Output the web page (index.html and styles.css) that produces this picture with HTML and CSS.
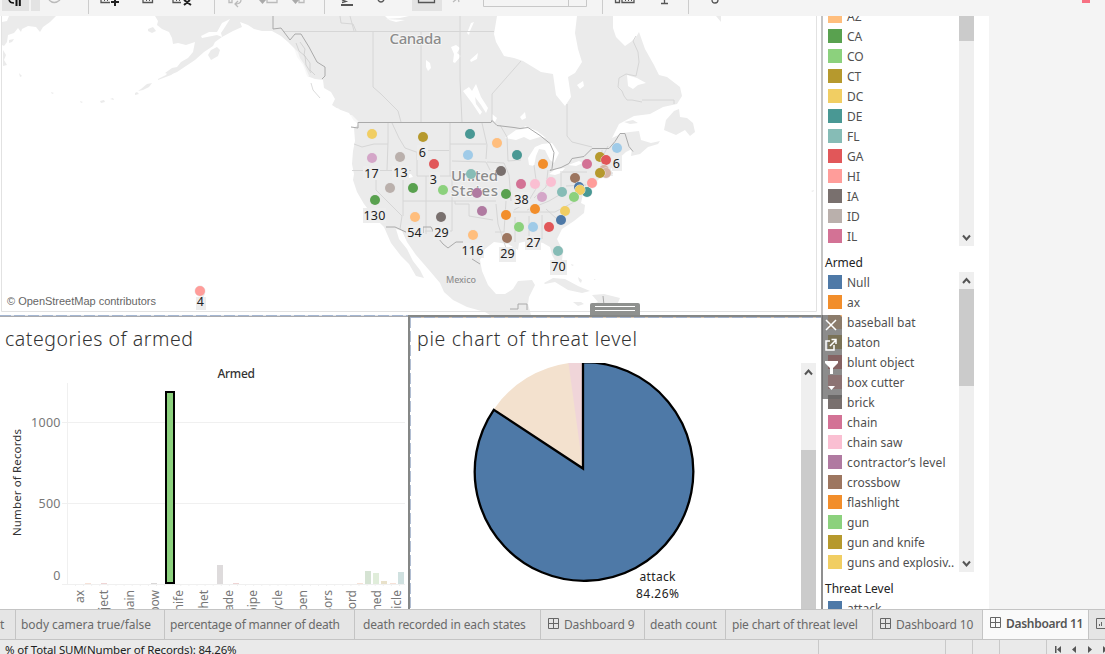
FILE: index.html
```html
<!DOCTYPE html>
<html lang="en">
<head>
<meta charset="utf-8">
<title>Dashboard 11</title>
<link rel="stylesheet" href="styles.css">
</head>
<body>
<div class="app">
<header class="toolbar">
<svg width="1105" height="16" viewBox="0 0 1105 16">
<path fill="#e3e3e3" d="M2 0h27v11H2zM31 0h9v11h-9zM412 0h30v11h-30z"/>
<path fill="#111" d="M15.500 0h2v6h-2zM18.800 0h2v6h-2z"/><path fill="none" stroke="#111" stroke-width="1.500" d="M9 0q1 3 5 3"/>
<path fill="none" stroke="#bbb" stroke-width="1.300" d="M49 0q5 5 11 0M229 0v2.500h3V0M241 0q0 4-6 4m3-3l-3 3 3 3M267 0v2.500h10V0M299 0v2.500h5V0M453 2l5-4 1 4"/>
<path fill="#aaa" d="M259 0h7l-3.500 4zM292 0h7l-3.500 4z"/>
<path fill="none" stroke="#555" stroke-width="1.300" d="M101 0v2.500h9M143 0v2.500h9.500V0M173 0v2.500h8M342 0l4 1.500-4 1M378 0q3 4 6 0M418.500 0v2.500h16V0M615.500 0v2.500h4V0M622 0v2.500h12V0M661 3.500h7M664.500 0v3M712 0q0 3 3 3t3-3"/>
<path fill="#555" d="M104 0h1v1h-1zM107 0h1v1h-1zM146 0h1v1h-1zM149 0h1v1h-1zM176 0h1v1h-1zM179 0h1v1h-1zM341 4h12v2h-12zM625 0h1v1h-1zM628 0h1v1h-1zM631 0h1v1h-1z"/>
<path fill="none" stroke="#222" stroke-width="2" d="M111 2h8M115 0v6M184 5l6-5M184 0l7 5"/>
<path fill="#ccc" d="M88 0h1v14h-1zM214 0h1v14h-1zM324 0h1v14h-1zM602 0h1v14h-1zM688 0h1v14h-1z"/>
<path fill="none" stroke="#c8c8c8" d="M483.500 0v6.500h103V0M568.500 0v6"/>
<path fill="#f77183" d="M1082 0h8v3h-8z"/>
</svg>
</header>
<main class="workspace">
<section class="sheets">
<div class="map">
<svg width="821" height="299" viewBox="0 16 821 299">
<g fill="#ebebeb">
<path d="M9 16H56L50 22 43 27 40 32 36 27 28 26 22 29 21 32 18 28 14 33 8 35 7 42 4 46 2 45V22L7 21ZM3 50L6 55 4 60 7 65 3 66ZM9 40l5-1-2 3-3 1ZM148 29l5-2 3 4-4 2-4-2ZM19 73l3 3-2 1ZM51 92l3 1-2 1ZM80 101l3 1-2 1ZM100 101l4-1 1 2-4 1ZM110 99l3-1 1 2ZM121 97l3 0ZM135 93l2-1 2 2-4 1ZM141 89l6-5 5-1-3 4-6 3-5 1ZM158 79l8-4 3-4 6-3 4 0-8 7-13 5ZM208 55l3-5 6-3 3 3-2 6-7 4Z"/>
<path d="M155 16L158 21 157 25 162 29 169 32 172 38 173 44 178 43 186 45 195 42 193 52 188 58 181 62 177 67 172 68 165 73 170 75 177 72 186 66 195 60 204 52 213 46 215 42 222 37 217 35 202 38 201 36 209 32 217 32 222 23 230 19 225 27 221 33 222 37 233 31 242 27 240 22 248 25 254 29 262 31 272 31 281 36 288 42 294 48 297 57 303 65 307 76 315 79 323 80 324 88 331 92 335 99 332 105 338 109 349 113 354 121 359 124 354 128 355 141 353 151 352 164 354 174 353 180 357 192 364 204 374 217 384 227 391 243 401 256 409 264 416 276 424 278 420 270 413 261 407 249 399 239 396 229 402 231 407 242 416 255 429 270 440 283 444 292 453 300 467 307 485 312 490 315H531L528 304 529 297 535 285 532 280 518 281 513 289 505 294 496 294 488 285 482 271 480 260 485 249 494 242 508 244 518 250 519 243 531 240 543 243 550 247 552 255 556 262 562 261 563 251 557 239 562 229 574 221 584 213 585 205 581 203 583 194 590 190 597 181 602 176 613 176 611 169 617 160 626 152 632 149 631 156 640 154 648 147 658 144 660 141 651 143 641 140 639 131 630 132 623 133 612 138 619 124 634 116 650 114 663 107 677 104 682 96 680 87 667 77 659 75 654 65 645 49 639 32 635 39 625 46 616 37 613 28 613 16H577L575 33 578 49 582 62 575 73 568 77 571 97 565 106 556 95 553 74 541 72 523 61 514 58 504 56 496 42 494 34 497 16Z"/>
<path d="M664 130l2-10 8-9 5-2 1 8 7 1 6 5 2 9-5 4-5-6-9 5ZM624 122l9-2 5 3-8 1ZM544 283l9-5 12 1 13 7 12 5-8 2-14-3-13-8-10 2ZM592 295l12-1 16 4-3 7-14 1-9 3-4-4 8-3ZM573 302l8 0 3 2-6 2ZM571 264l3 1-2 1ZM578 277l4 3-1 3-2-2ZM586 284l3 1ZM594 279l2 0-2 1ZM182 283l2 0ZM185 283l1 1ZM191 287h1ZM195 288l10 6-2 4-3-3ZM811 191l3-1-1 2ZM716 16h5v6Z"/>
</g>
<g fill="#fff">
<path d="M385 19l15-1 9-2h-24l4 4 7 2 9-2ZM471 23l3-1-4 9-1 4-2-2ZM451 47l5-2 4 3-3 5 4 3-6 7-2-1 1-8ZM426 60l4 3 1 5-3 3-2-4ZM470 60l8-7-1 6-6 3ZM463 91l6-4 3 4 4-7 5 13 7 11-2 5-5-8-6-8 1 7 6 8-2 3-8-12ZM492 114l5 4-2 4-3-3ZM520 117l5-5 1 6-4 2ZM577 85l6-4 1 5-4 3ZM627 75l10 3 9 5-8 2-5 4-5-3Z"/>
<path d="M505 138l11-8 7-1 2-3 12 5 9 7-6-1-10 3-6-3-8 3ZM528 158l7-11 7-3 10-1 3 4 4 6-5 10-4-3-5-10-6-1-3 7-2 10-5-1ZM549 174l7-5 9-1-4 5-6 2ZM568 165l11-4 4 2-7 3ZM405 175l6-1 2 3-4 1Z"/>
<path d="M294 48l4 4 2 6 4 6 5 12-3 1-6-14-6-7ZM317 98l5 1 8 10 5 0-9-4-9-5ZM334 108l4 0 7 6 7 1 7 7-5 1-9-6Z" opacity=".65"/>
</g>
<g fill="none" stroke="#c3c3c3" stroke-width=".6"><path d="M300 42l5 7-1 6 6 8 0 7 5 5M296 43l3 8 6 5 1 9 5 8M311 83l2 7 7 8"/></g>
<g fill="none" stroke="#d6d6d6">
<path d="M283 31.500H494M373 31v56l8 7 17 17 3 11M421 31v91M460 16v64l2 42M492 122V94l29-33M567 104v32l5 6 20 5M340 16l1 7 12 1 3 7M350 16l4 15M642 100h32v4M642 102l-10-2-5 0-3-4-2-5-4-4 1-9 7-4 10 2 3-14-1-10-5-11 3-5"/>
<path d="M388 122v20l-1 28M392 123l7 15 6 10 14 5M354 144l8 3 12-3 14 0M417 153v17M417 150.500h32M450 122v54M450 144h36M482 123l5 22-1 14M452 161l34 1 4 8M352 170.500H411M376 170v20l26 26-2 13M403 170v46M403 201H496M426 176v58M417 170v6h35v55h-27M455 201v3h14v12l24 4M487 162l17 1 5 12 2 26M500 125l7 12 1 24 13-1M506 201l-2 31h-9M496 204l2 20 8 24M513 212h42l21-11M515 217v25M529 216v26M542 215v24M534 165l3 22-9 15-14 8M548 170l-2 17-12 11M561 171v23l-12 7-22 9M562 172h25M566 186l20-1M546 209l11 10M602 150v20M596 174l17-1M604 154l4-8"/>
</g>
<g fill="none" stroke="#aaa">
<path d="M273 16V29l8-1 9 12 5-6 6 0 8 13 8 15 8 5 0 9-3 3M351 127l7 1v-5.500H491l1-2 5 5 17 2 6 1 8-1 12 8 10 8 4 9-2 16-2 2 11-3 8-4 3-5 12-2 8-8 17 0 6-7 5-8h5l4 13 4 5M386 227l9 0 13 6h15v-6h8l3 6 9 11 5 4 8-6 7 0M472 259l8 5M510 309h8v-5h9l0 6M603 296l1 9"/>
</g>
<g class="country"><text x="389.500" y="44" textLength="52">Canada</text><text x="451" y="181" textLength="47">United</text><text x="451" y="195.500" textLength="47">States</text></g>
<text class="region" x="446" y="283" textLength="30">Mexico</text>
<g fill="#ededed"><path d="M363 166h17v14h-17zM392 166h17v14h-17zM417 145h11v15h-11zM429 172h11v15h-11zM363 208h23v15h-23zM406 225h17v15h-17zM433 225h17v15h-17zM461 243h23v15h-23zM499 247h17v15h-17zM525 236h16v14h-16zM513 192h17v15h-17zM550 260h17v15h-17zM612 156h10v15h-10zM196 297h10v13h-10z"/></g>
<g class="marks">
<circle cx="372" cy="134" r="5" fill="#f1ce63"/><circle cx="423" cy="137" r="5" fill="#b6992d"/><circle cx="470" cy="134" r="5" fill="#499894"/><circle cx="497" cy="143" r="5" fill="#ffbe7d"/><circle cx="468" cy="155" r="5" fill="#a0cbe8"/><circle cx="517" cy="155" r="5" fill="#499894"/><circle cx="372" cy="158" r="5" fill="#d4a6c8"/><circle cx="400" cy="157" r="5" fill="#bab0ac"/><circle cx="434" cy="164" r="5" fill="#e15759"/><circle cx="543" cy="164" r="5" fill="#f28e2b"/><circle cx="587" cy="164" r="5" fill="#d37295"/><circle cx="600" cy="157" r="5" fill="#b6992d"/><circle cx="606" cy="160" r="5" fill="#e15759"/><circle cx="617" cy="148" r="5" fill="#a0cbe8"/><circle cx="604" cy="170" r="5" fill="#d7b5a6"/><circle cx="606" cy="173" r="5" fill="#d7b5a6"/><circle cx="600" cy="173" r="5" fill="#b6992d"/><circle cx="471" cy="174" r="5" fill="#86bcb6"/><circle cx="501" cy="171" r="5" fill="#79706e"/><circle cx="521" cy="184" r="5" fill="#d37295"/><circle cx="535" cy="184" r="5" fill="#fabfd2"/><circle cx="551" cy="182" r="5" fill="#fabfd2"/><circle cx="575" cy="178" r="5" fill="#9d7660"/><circle cx="579" cy="187" r="5" fill="#4e79a7"/><circle cx="587" cy="192" r="5" fill="#499894"/><circle cx="580" cy="190" r="5" fill="#f1ce63"/><circle cx="592" cy="183" r="5" fill="#ff9d9a"/><circle cx="574" cy="197" r="5" fill="#8cd17d"/><circle cx="562" cy="192" r="5" fill="#86bcb6"/><circle cx="542" cy="197" r="5" fill="#d4a6c8"/><circle cx="535" cy="209" r="5" fill="#f28e2b"/><circle cx="565" cy="211" r="5" fill="#f1ce63"/><circle cx="561" cy="220" r="5" fill="#4e79a7"/><circle cx="549" cy="227" r="5" fill="#e15759"/><circle cx="533" cy="227" r="5" fill="#a0cbe8"/><circle cx="519" cy="227" r="5" fill="#8cd17d"/><circle cx="506" cy="215" r="5" fill="#f28e2b"/><circle cx="506" cy="194" r="5" fill="#59a14f"/><circle cx="507" cy="238" r="5" fill="#9d7660"/><circle cx="558" cy="251" r="5" fill="#86bcb6"/><circle cx="477" cy="193" r="5" fill="#b07aa1"/><circle cx="482" cy="211" r="5" fill="#b07aa1"/><circle cx="473" cy="235" r="5" fill="#ffbe7d"/><circle cx="441" cy="217" r="5" fill="#79706e"/><circle cx="415" cy="217" r="5" fill="#ffbe7d"/><circle cx="413" cy="188" r="5" fill="#59a14f"/><circle cx="390" cy="188" r="5" fill="#bab0ac"/><circle cx="443" cy="190" r="5" fill="#8cd17d"/><circle cx="375" cy="200" r="5" fill="#59a14f"/><circle cx="200" cy="291" r="5" fill="#ff9d9a"/>
</g>
<g class="counts"><text x="422.500" y="157">6</text><text x="371.500" y="178">17</text><text x="400.500" y="177">13</text><text x="433.500" y="184">3</text><text x="374.500" y="220">130</text><text x="414.500" y="237">54</text><text x="441.500" y="237">29</text><text x="472.500" y="255">116</text><text x="507.500" y="258">29</text><text x="533.500" y="247">27</text><text x="521.500" y="204">38</text><text x="558.500" y="271">70</text><text x="616.500" y="168">6</text><text x="200.500" y="306">4</text></g>
<text class="credit" x="7" y="305" textLength="149">© OpenStreetMap contributors</text>
<path fill="none" stroke="#e2e2e2" d="M1.500 16V311.500H816.500V16"/>
<path fill="#8f918f" d="M590 315v-10q0-2 2-2h46q2 0 2 2v10z"/><path stroke="#fff" d="M595 306.500h40M595 310.500h40"/>
</svg>
</div>
<div class="lower">
<article class="panel bars">
<h2>categories of armed</h2>
<svg width="408" height="246" viewBox="0 363 408 246">
<g fill="none" stroke="#f0f0f0"><path d="M67.500 383V585M62 422.500H405M62 503.500H405M62 584.500H405"/><path stroke-dasharray="1 7.100" d="M75 585.500H405"/></g>
<text class="head" x="217.500" y="378" textLength="37.500">Armed</text>
<g class="ticks"><text x="60.500" y="427" textLength="29.500">1000</text><text x="60.500" y="508" textLength="22">500</text><text x="60.500" y="580">0</text></g>
<text class="axis" transform="translate(21 536) rotate(-90)" textLength="107">Number of Records</text>
<path fill="#f6e2d8" d="M85 583h6v1h-6zM357 583h6v1h-6zM390 583h6v1h-6z"/><path fill="#efd5d5" d="M101 583h6v1h-6zM233 583h6v1h-6z"/><path fill="#dad8d8" d="M151 583h6v1h-6z"/>
<path fill="#dedbdc" d="M217 565h6v19h-6z"/><path fill="#d5e3d3" d="M365 571h6v13h-6z"/><path fill="#e0edda" d="M373 573h6v11h-6z"/><path fill="#e8e1ca" d="M381 581h6v3h-6z"/><path fill="#d0e1e0" d="M398 572h6v12h-6z"/>
<path fill="#8cd17d" stroke="#000" stroke-width="2" d="M166 392h8v191h-8z"/>
<g class="members"><text transform="translate(84 590) rotate(-90)">ax</text><text transform="translate(108 590) rotate(-90)">object</text><text transform="translate(133.500 590) rotate(-90)">chain</text><text transform="translate(158.500 590) rotate(-90)">crossbow</text><text transform="translate(183 590) rotate(-90)">knife</text><text transform="translate(207.500 590) rotate(-90)">hatchet</text><text transform="translate(232.500 590) rotate(-90)">grenade</text><text transform="translate(257 590) rotate(-90)">pipe</text><text transform="translate(282 590) rotate(-90)">motorcycle</text><text transform="translate(307 590) rotate(-90)">pen</text><text transform="translate(331.500 590) rotate(-90)">scissors</text><text transform="translate(356 590) rotate(-90)">sword</text><text transform="translate(381 590) rotate(-90)">unarmed</text><text transform="translate(401 590) rotate(-90)">vehicle</text></g>
</svg>
</article>
<article class="panel pie">
<h2>pie chart of threat level</h2>
<div class="pie-body">
<svg width="391" height="246" viewBox="410 363 391 246">
<path fill="#f3e1ce" d="M583 469L494 409A109 109 0 0 1 569 363L583 363Z"/><path fill="#f0d5d9" d="M583 469L568.500 363H583Z"/>
<path fill="#4e79a7" stroke="#000" stroke-width="2.300" d="M583 468.500V362.200A109.300 109.300 0 1 1 493.800 409.800Z"/>
<g class="slice-label"><text x="657.500" y="581" textLength="36">attack</text><text x="657.500" y="598" textLength="43">84.26%</text></g>
</svg>
<div class="scroll pie-scroll"><svg width="15" height="18" viewBox="0 0 15 18"><path d="M4 11.500l3.500-4 3.500 4"/></svg><div class="thumb"></div></div>
</div>
</article>
</div>
</section>
<aside class="legends">
<div class="legend states"><ul>
<li><i style="background:#ffbe7d"></i>AZ</li><li><i style="background:#59a14f"></i>CA</li><li><i style="background:#8cd17d"></i>CO</li><li><i style="background:#b6992d"></i>CT</li><li><i style="background:#f1ce63"></i>DC</li><li><i style="background:#499894"></i>DE</li><li><i style="background:#86bcb6"></i>FL</li><li><i style="background:#e15759"></i>GA</li><li><i style="background:#ff9d9a"></i>HI</li><li><i style="background:#79706e"></i>IA</li><li><i style="background:#bab0ac"></i>ID</li><li><i style="background:#d37295"></i>IL</li></ul>
<div class="scroll"><div class="thumb"></div><svg width="15" height="18" viewBox="0 0 15 18"><path d="M4 7.500l3.500 4 3.500-4"/></svg></div></div>
<h3>Armed</h3>
<div class="legend weapons"><ul>
<li><i style="background:#4e79a7"></i>Null</li><li><i style="background:#f28e2b"></i>ax</li><li><i style="background:#ffbe7d"></i>baseball bat</li><li><i style="background:#b6992d"></i>baton</li><li><i style="background:#e15759"></i>blunt object</li><li><i style="background:#ff9d9a"></i>box cutter</li><li><i style="background:#79706e"></i>brick</li><li><i style="background:#d37295"></i>chain</li><li><i style="background:#fabfd2"></i>chain saw</li><li><i style="background:#b07aa1"></i><span class="level">contractor’s level</span></li><li><i style="background:#9d7660"></i>crossbow</li><li><i style="background:#f28e2b"></i>flashlight</li><li><i style="background:#8cd17d"></i>gun</li><li><i style="background:#b6992d"></i>gun and knife</li><li><i style="background:#f1ce63"></i>guns and explosiv..</li></ul>
<div class="scroll"><svg width="15" height="17" viewBox="0 0 15 17"><path d="M4 11l3.500-4 3.500 4"/></svg><div class="thumb"></div><svg width="15" height="17" viewBox="0 0 15 17"><path d="M4 6.500l3.500 4 3.500-4"/></svg></div></div>
<h3>Threat Level</h3>
<div class="legend threat"><ul><li><i style="background:#4e79a7"></i>attack</li></ul></div>
<svg class="sheet-tools" width="20" height="84" viewBox="0 0 20 84"><path fill="#666" fill-opacity=".75" d="M0 0h18l2 2v80l-2 2H0z"/><g fill="none" stroke="#fff" stroke-width="1.500"><path d="M4 5l10 10M14 5L4 15M8 26H4v9h8v-5M8 31l6-6M9.500 24.500H14V29"/></g><path fill="#fff" d="M3 46h13v2l-5 5v6H8v-6L3 48zM6 71h7l-3.500 4z"/></svg>
</aside>
</main>
<nav class="tabs">
<a class="t0">t</a><a class="t1">body camera true/false</a><a class="t2">percentage of manner of death</a><a class="t3">death recorded in each states</a>
<a class="t4"><svg width="11" height="11" viewBox="0 0 11 11"><path d="M.5.500h10v10H.500zM5.500.500v10M.5 5.500h10"/></svg>Dashboard 9</a><a class="t5">death count</a><a class="t6">pie chart of threat level</a>
<a class="t7"><svg width="11" height="11" viewBox="0 0 11 11"><path d="M.5.500h10v10H.500zM5.500.500v10M.5 5.500h10"/></svg>Dashboard 10</a>
<a class="t8"><svg width="11" height="11" viewBox="0 0 11 11"><path d="M.5.500h10v10H.500zM5.500.500v10M.5 5.500h10"/></svg>Dashboard 11</a>
<a class="t9"><svg width="11" height="11" viewBox="0 0 11 11"><path d="M10.500.500H.500v10h10M3.500 8V6M5.500 8V4"/></svg></a>
</nav>
<footer class="status"><span>% of Total SUM(Number of Records): 84.26%</span>
<svg width="287" height="14" viewBox="818 640 287 14"><path fill="none" stroke="#c9c9c9" d="M818.500 640v14M945.500 640v14M972.500 640v14M999.500 640v14M1046.500 640v14"/><path fill="#555" d="M1055 646h1.500v7H1055zM1061 646v7l-4-3.500zM1076 646v7l-4-3.500zM1088 646v7l4-3.500zM1103 646v7l4-3.500z"/></svg></footer>
</div>
</body>
</html>
```
FILE: styles.css
```css
* { box-sizing: border-box; }
body { margin: 0; background: #f4f4f4; font-family: "Noto Sans", "Open Sans", sans-serif; color: #333; }
svg { display: block; flex: none; }
.app { width: 1105px; height: 654px; display: flex; flex-direction: column; overflow: hidden; }
.toolbar { height: 16px; background: #f4f4f4; }
.workspace { height: 593px; display: flex; overflow: hidden; }
.sheets { width: 821px; background: #fff; }
.map { height: 299px; }
.country { font-size: 15px; font-weight: 500; fill: #8c8c8c; stroke: #f5f5f5; stroke-width: 2px; paint-order: stroke; }
.region { font-size: 9px; font-weight: 500; fill: #909090; }
.marks { stroke: #e9e9e9; stroke-width: 1px; paint-order: stroke; }
.counts { font-size: 12.5px; fill: #222; text-anchor: middle; letter-spacing: .2px; }
.credit { font-family: "Liberation Sans", Arial, sans-serif; font-size: 11px; fill: #666; }
.lower { display: flex; height: 294px; }
.panel { position: relative; height: 294px; padding-top: 2px; }
.bars {
  width: 408px;
  background: repeating-linear-gradient(90deg, #a4b6d2 0 11px, #dfe3ea 11px 14px) 0 0 / 100% 1px no-repeat,
    linear-gradient(#aaabaf, #aaabaf) 0 1px / 100% 1px no-repeat;
}
.pie { width: 413px; padding-top: 0; border-top: 2px solid #858786; border-left: 2px solid #858786; }
.pie::before {
  content: ""; position: absolute; inset: 0; pointer-events: none;
  background: repeating-linear-gradient(90deg, #a3b1ca 0 11px, #d3c4b6 11px 14px) 0 0 / 100% 1px no-repeat,
    repeating-linear-gradient(#b0bdd2 0 11px, #fff 11px 14px) 0 0 / 1px 100% no-repeat;
}
.panel h2 { height: 46px; margin: 0; font-size: 19.5px; font-weight: 300; line-height: 44px; color: #333; white-space: nowrap; }
.bars h2 { padding-left: 5px; letter-spacing: .55px; }
.pie h2 { padding-left: 7px; letter-spacing: .7px; }
.pie-body { display: flex; }
.scroll { width: 15px; background: #efefef; display: flex; flex-direction: column; }
.scroll path { fill: none; stroke: #555; stroke-width: 2; }
.thumb { background: #cbcbcb; }
.pie-scroll { height: 246px; }
.pie-scroll .thumb { margin-top: 69px; height: 159px; }
.head { font-size: 12px; font-weight: 500; fill: #333; }
.ticks { font-size: 12.5px; fill: #777; text-anchor: end; }
.axis { font-size: 11.5px; fill: #333; }
.members { font-size: 12px; fill: #777; text-anchor: end; }
.slice-label { font-size: 12px; fill: #222; text-anchor: middle; }
.legends { position: relative; width: 168px; background: #fff; border-left: 2px solid; border-image: linear-gradient(#c4c4c4 299px, #8f8f8f 299px) 2; }
.legend { display: flex; justify-content: space-between; overflow: hidden; padding-right: 15px; }
.legend ul { margin: 0; padding: 0; list-style: none; }
.legend li { display: flex; align-items: flex-start; height: 20px; font-size: 12px; line-height: 22px; color: #505050; white-space: nowrap; }
.legend i { width: 14px; height: 14px; margin: 3px 5px; flex: none; }
.level { letter-spacing: .2px; }
.states { height: 230px; }
.states ul { margin-top: -10px; }
.states .thumb { height: 25px; }
.states .scroll { justify-content: space-between; }
.legends h3 { margin: 0; padding-left: 2px; height: 26px; line-height: 34px; font-size: 12px; font-weight: 400; color: #222; }
.weapons { height: 300px; }
.weapons .thumb { height: 97px; margin-bottom: auto; }
.threat { height: 25px; }
.sheet-tools { position: absolute; left: -1px; top: 299px; }
.tabs { height: 31px; display: flex; border-top: 1px solid #c4c4c4; border-bottom: 1px solid #c4c4c4; background: #e5e5e5; }
.tabs a { display: flex; align-items: center; flex: none; border-right: 1px solid #c4c4c4; padding: 0 0 0 6px; font-size: 12px; letter-spacing: -.1px; color: #6a6a6a; white-space: nowrap; }
.tabs svg { margin: 0 5px 2px 1px; }
.tabs path { fill: none; stroke: #666; }
.tabs .t0 { width: 16px; padding-left: 0; }
.tabs .t1 { width: 149px; padding-left: 5px; letter-spacing: -.03px; }
.tabs .t2 { width: 190px; padding-left: 5px; letter-spacing: -.23px; }
.tabs .t3 { width: 186px; padding-left: 8px; letter-spacing: -.14px; }
.tabs .t4 { width: 104px; letter-spacing: -.15px; }
.tabs .t5 { width: 81px; padding-left: 5px; }
.tabs .t6 { width: 147px; padding-left: 6px; letter-spacing: -.18px; }
.tabs .t7 { width: 110px; letter-spacing: -.15px; }
.tabs .t8 { width: 106px; background: #fafafa; color: #555; font-weight: 600; letter-spacing: -.3px; padding-bottom: 2px; }
.tabs .t9 { width: 30px; }
.status { height: 14px; display: flex; justify-content: space-between; background: #eaeaea; font-size: 11.5px; letter-spacing: -.15px; color: #222; }
.status span { padding-left: 5px; line-height: 20px; white-space: nowrap; }
```
